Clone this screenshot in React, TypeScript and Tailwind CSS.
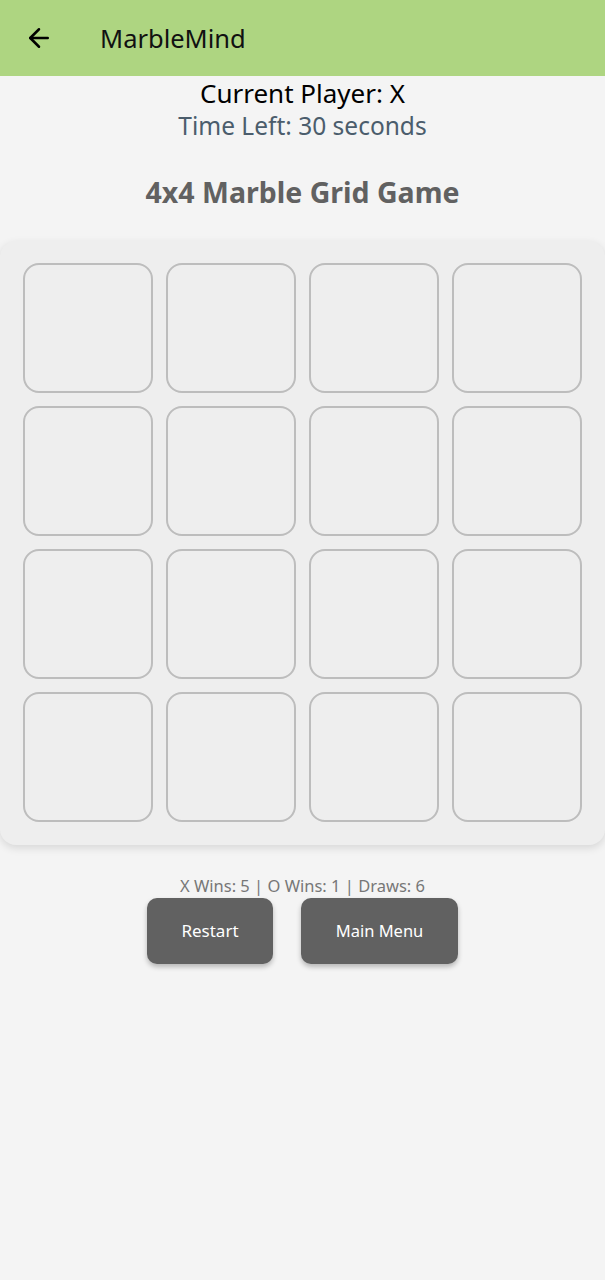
import { ArrowLeft } from 'lucide-react';

const cells = Array.from({ length: 16 }, (_, i) => i);

const App = () => {
  return (
    <div className="min-h-[1280px] w-full bg-[#f4f4f4] font-['Noto_Sans',sans-serif]">
      {/* App bar */}
      <div className="flex h-[76px] items-center bg-[#aed581] pl-[24px]">
        <ArrowLeft className="h-[30px] w-[30px] text-black" strokeWidth={2} />
        <h1 className="ml-[46px] text-[25.5px] text-[#111]">MarbleMind</h1>
      </div>

      {/* Status */}
      <div className="flex flex-col items-center">
        <p className="text-[26px] leading-[34px] text-black">Current Player: X</p>
        <p className="text-[24.5px] leading-[32px] text-[#4b5d6c]">Time Left: 30 seconds</p>
        <h2 className="mt-[32px] text-[28.5px] font-bold leading-[36px] text-[#616161]">4x4 Marble Grid Game</h2>
      </div>

      {/* Board */}
      <div className="mt-[31px] rounded-[16px] bg-[#eeeeee] px-[23px] pt-[22px] pb-[23px] shadow-[0_3px_8px_rgba(0,0,0,0.12)]">
        <div className="grid grid-cols-4 gap-[13px]">
          {cells.map((c) => (
            <div
              key={c}
              className="h-[130px] rounded-[16px] border-2 border-[#bdbdbd] bg-[#eeeeee]"
            />
          ))}
        </div>
      </div>

      {/* Score + actions */}
      <div className="mt-[30px] flex flex-col items-center">
        <p className="text-[16.5px] leading-[22px] text-[#777]">X Wins: 5 | O Wins: 1 | Draws: 6</p>
        <div className="mt-[1px] flex gap-[28px]">
          <button className="h-[66px] w-[126px] rounded-[10px] bg-[#616161] text-[17px] text-white shadow-[0_3px_5px_rgba(0,0,0,0.25)]">
            Restart
          </button>
          <button className="h-[66px] w-[157px] rounded-[10px] bg-[#616161] text-[16.5px] text-white shadow-[0_3px_5px_rgba(0,0,0,0.25)]">
            Main Menu
          </button>
        </div>
      </div>
    </div>
  );
};

export default App;
